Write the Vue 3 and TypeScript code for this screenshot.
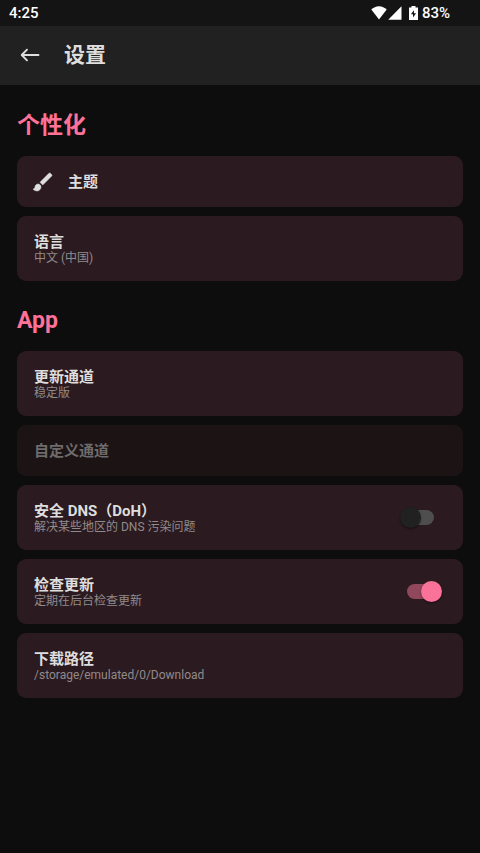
<script setup lang="ts">
import { ref } from 'vue'

interface Setting {
  id: string
  title: string
  summary?: string
  icon?: 'brush'
  disabled?: boolean
  toggle?: boolean
}

interface Group {
  id: string
  title: string
  items: Setting[]
}

const groups: Group[] = [
  {
    id: 'personalization',
    title: '个性化',
    items: [
      { id: 'theme', title: '主题', icon: 'brush' },
      { id: 'language', title: '语言', summary: '中文 (中国)' },
    ],
  },
  {
    id: 'app',
    title: 'App',
    items: [
      { id: 'channel', title: '更新通道', summary: '稳定版' },
      { id: 'custom-channel', title: '自定义通道', disabled: true },
      { id: 'doh', title: '安全 DNS（DoH）', summary: '解决某些地区的 DNS 污染问题', toggle: true },
      { id: 'check-update', title: '检查更新', summary: '定期在后台检查更新', toggle: true },
      { id: 'download-path', title: '下载路径', summary: '/storage/emulated/0/Download' },
    ],
  },
]

const toggles = ref<Record<string, boolean>>({ doh: false, 'check-update': true })
</script>

<template>
  <div class="screen" lang="zh-CN">
    <div class="status">
      <span>4:25</span>
      <div class="status-right">
        <svg class="wifi" width="16" height="14" viewBox="0 0 16 14">
          <path d="M8 13.500 0.300 3.600C2.400 1.600 5 0.300 8 0.300s5.600 1.300 7.700 3.300z" fill="#fff" />
        </svg>
        <svg class="signal" width="14" height="14" viewBox="0 0 14 14">
          <path d="M13.500 0.300V13.700H0.200z" fill="#fff" />
        </svg>
        <svg class="battery" width="9" height="14" viewBox="0 0 9 14">
          <path
            fill-rule="evenodd"
            fill="#fff"
            d="M2.500 0h4v1.500H9V14H0V1.500h2.500zM5 4.200 1.900 8.300H4v3.200l3.100-4.300H5z"
          />
        </svg>
        <span>83%</span>
      </div>
    </div>

    <header class="appbar">
      <button class="back" type="button" aria-label="返回">
        <svg width="20" height="14" viewBox="0 0 20 14">
          <path
            d="M18.500 7H2M7 1.700 1.700 7 7 12.300"
            fill="none"
            stroke="#dedede"
            stroke-width="1.900"
            stroke-linecap="round"
            stroke-linejoin="round"
          />
        </svg>
      </button>
      <h1>设置</h1>
    </header>

    <main>
      <section v-for="group in groups" :key="group.id">
        <h2>{{ group.title }}</h2>
        <div class="list">
          <template v-for="item in group.items" :key="item.id">
            <label v-if="item.toggle" class="card" :for="item.id">
              <span class="text">
                <span class="title">{{ item.title }}</span>
                <span class="summary">{{ item.summary }}</span>
              </span>
              <input :id="item.id" v-model="toggles[item.id]" class="switch" type="checkbox" role="switch" />
            </label>
            <button v-else class="card" type="button" :disabled="item.disabled">
              <svg v-if="item.icon === 'brush'" class="icon" width="24" height="24" viewBox="0 0 24 24">
                <path
                  fill="#dedede"
                  stroke="#dedede"
                  stroke-width="0.500"
                  d="M7 14c-1.660 0-3 1.340-3 3 0 1.310-1.160 2-2 2 .92 1.220 2.490 2 4 2 2.210 0 4-1.790 4-4 0-1.660-1.340-3-3-3zm13.710-9.370-1.340-1.340a.996.996 0 0 0-1.410 0L9 12.250 11.750 15l8.960-8.960a.996.996 0 0 0 0-1.410z"
                />
              </svg>
              <span class="text">
                <span class="title">{{ item.title }}</span>
                <span v-if="item.summary" class="summary">{{ item.summary }}</span>
              </span>
            </button>
          </template>
        </div>
      </section>
    </main>
  </div>
</template>

<style>
body {
  background: #0d0d0d;
}
</style>

<style scoped>
.screen {
  min-height: 100vh;
  background: #0d0d0d;
  color: #dedede;
  font-family: Roboto, 'Noto Sans CJK SC', sans-serif;
}

.status {
  display: flex;
  align-items: center;
  justify-content: space-between;
  height: 26px;
  padding: 0 30px 0 9px;
  background: #141414;
  color: #fff;
  font-size: 15px;
  font-weight: 500;
  line-height: 28px;
}

.status-right {
  display: flex;
  align-items: center;
}

.signal {
  margin-left: 1px;
}

.battery {
  margin: 0 4px 0 7px;
}

.appbar {
  display: flex;
  align-items: center;
  gap: 24px;
  padding: 15px 20px 16px;
  background: #212121;
}

.back {
  display: flex;
  padding: 0;
  border: 0;
  background: none;
  cursor: pointer;
}

h1 {
  margin: 0;
  font-size: 21px;
  font-weight: 700;
  line-height: 28px;
}

main {
  padding: 23px 17px;
}

section + section {
  margin-top: 22px;
}

h2 {
  margin: 0 0 12px;
  color: #fe7299;
  font-size: 23px;
  font-weight: 700;
  line-height: 36px;
}

.list {
  display: flex;
  flex-direction: column;
  gap: 9px;
}

.card {
  display: flex;
  align-items: center;
  width: 100%;
  box-sizing: border-box;
  padding: 18px 21px 15px 17px;
  border: 0;
  border-radius: 9px;
  background: #2b1a1f;
  color: inherit;
  font: inherit;
  text-align: left;
  cursor: pointer;
}

.card:has(.icon),
.card:disabled {
  padding-bottom: 17px;
}

.card:disabled {
  background: #1c1315;
  color: #6e6b6c;
  cursor: default;
}

.icon {
  margin: -4px 13px -4px -3px;
}

.text {
  display: flex;
  flex: 1;
  flex-direction: column;
}

.title {
  font-size: 15px;
  font-weight: 700;
  line-height: 16px;
}

.summary {
  color: #918a8c;
  font-size: 12px;
  line-height: 16px;
}

.switch {
  display: flex;
  align-items: flex-start;
  appearance: none;
  width: 42px;
  height: 24px;
  margin: 0;
  cursor: pointer;
}

.switch::before {
  content: '';
  width: 27px;
  height: 15px;
  margin: 3px 0 0 7px;
  border-radius: 8px;
  background: #4e4e4e;
}

.switch::after {
  content: '';
  width: 21px;
  height: 21px;
  margin-left: -34px;
  border-radius: 50%;
  background: #212121;
  box-shadow: 0 1px 2px rgb(0 0 0 / 45%);
}

.switch:checked::before {
  background: #91475c;
}

.switch:checked::after {
  margin-left: -13px;
  background: #fa7298;
}
</style>
